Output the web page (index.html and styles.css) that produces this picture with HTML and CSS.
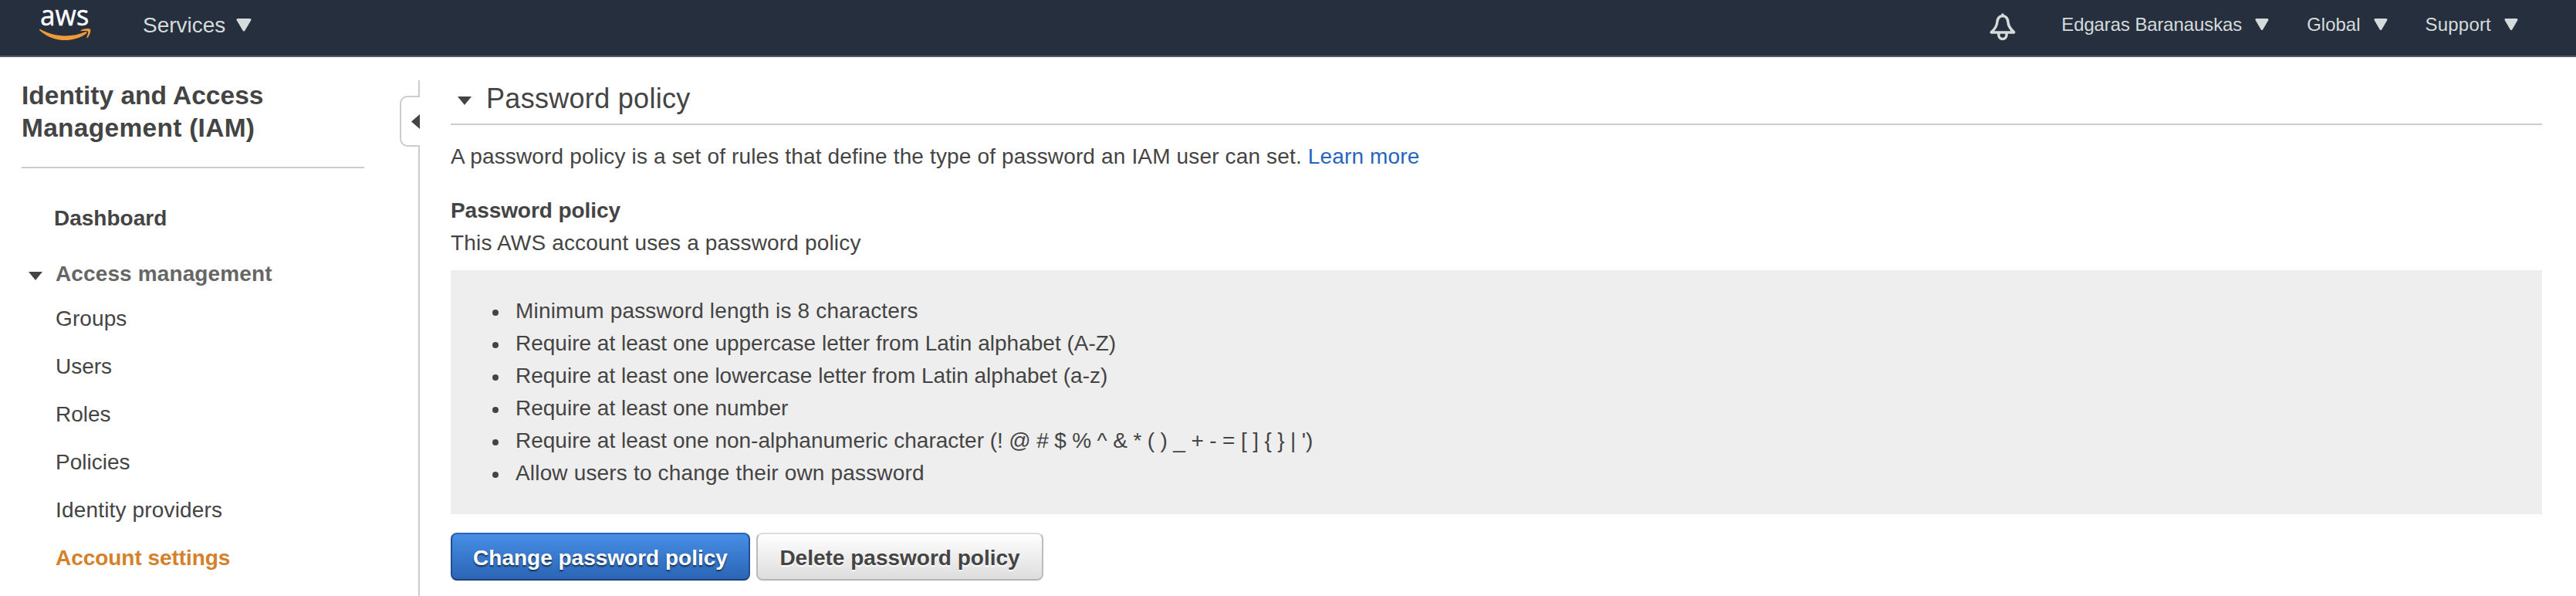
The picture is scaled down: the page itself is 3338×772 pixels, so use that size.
FILE: index.html
```html
<!DOCTYPE html>
<html lang="en">
<head>
<meta charset="utf-8">
<title>IAM Management Console</title>
<link rel="stylesheet" href="styles.css">
</head>
<body>
<header class="topbar">
  <a class="logo" aria-label="aws">
    <svg width="80" height="70" viewBox="46 0 80 70">
      <text class="logo-text" x="52" y="32.500" textLength="63.5" lengthAdjust="spacingAndGlyphs">aws</text>
      <path fill="#f19a38" d="M52 37.800c18 10.200 39.500 11.300 58.500 3.400c1.600-.6 2.700 1.100 1.200 2.200c-7.200 5.500-17.500 8.600-27.200 8.600c-12.800 0-24.400-4.800-33-12.600c-.9-.9-.3-2 .5-1.600z"/>
      <path fill="#f19a38" d="M104.800 39.300c3.300-2.600 11-3 12.200-1.600c1.100 1.400-.3 7.900-3.700 11.300c-.7.600-1.400.2-1-.6c1-2.300 2.500-6.500 1.700-7.600c-.9-1.200-5.700-.8-8.500-.5c-.9.100-1.200-.5-.7-1z"/>
    </svg>
  </a>
  <nav class="nav-left">
    <a class="nav-item services">Services
      <svg class="caret-lg" width="20" height="17" viewBox="0 0 20 17"><path d="M2 1.500H18L10 15z"/></svg>
    </a>
  </nav>
  <nav class="nav-right">
    <svg class="bell" width="36" height="38" viewBox="0 0 36 38">
      <path d="M18 5.500C13 6 11.200 9.500 10.900 14C10.500 19 8 22.500 3.300 26.900H32.700C28 22.500 25.500 19 25.100 14C24.800 9.500 23 6 18 5.500zM18 4V5.500"/>
      <path d="M12.900 27.500V30.300a5.100 5.100 0 0 0 10.200 0V27.500"/>
    </svg>
    <a class="nav-item user">Edgaras Baranauskas<svg class="caret" width="18" height="15" viewBox="0 0 18 15"><path d="M2 1.500H16L9 13.500z"/></svg></a>
    <a class="nav-item region">Global<svg class="caret" width="18" height="15" viewBox="0 0 18 15"><path d="M2 1.500H16L9 13.500z"/></svg></a>
    <a class="nav-item support">Support<svg class="caret" width="18" height="15" viewBox="0 0 18 15"><path d="M2 1.500H16L9 13.500z"/></svg></a>
  </nav>
</header>
<div class="layout">
  <aside class="sidebar">
    <h1 class="side-title">Identity and Access <span class="side-title-end">Management (IAM)</span></h1>
    <a class="side-dashboard">Dashboard</a>
    <div class="side-group"><svg width="18" height="11" viewBox="0 0 18 11"><path d="M0 0H18L9 11z"/></svg>Access management</div>
    <ul class="side-links">
      <li class="groups">Groups</li>
      <li>Users</li>
      <li>Roles</li>
      <li>Policies</li>
      <li class="wide">Identity providers</li>
      <li class="active">Account settings</li>
    </ul>
  </aside>
  <div class="divider">
    <div class="divider-top"></div>
    <div class="handle"><svg width="11" height="19" viewBox="0 0 11 19"><path d="M11 0V19L0 9.500z"/></svg></div>
    <div class="divider-bottom"></div>
  </div>
  <main class="content">
    <h2 class="section-title"><svg width="18" height="11" viewBox="0 0 18 11"><path d="M0 0H18L9 11z"/></svg><span>Password policy</span></h2>
    <p class="intro">A password policy is a set of rules that define the type of password an IAM user can set. <a class="link">Learn more</a></p>
    <h3 class="sub-title">Password policy</h3>
    <p class="status">This AWS account uses a password policy</p>
    <ul class="rules">
      <li class="wide">Minimum password length is 8 characters</li>
      <li>Require at least one uppercase letter from Latin alphabet (A-Z)</li>
      <li>Require at least one lowercase letter from Latin alphabet (a-z)</li>
      <li>Require at least one number</li>
      <li><span>Require at least one non-alphanumeric character <span class="symbols">(! @ # $ % ^ &amp; * ( ) _ + - = [ ] { } | ')</span></span></li>
      <li class="wide">Allow users to change their own password</li>
    </ul>
    <div class="actions">
      <button class="btn primary">Change password policy</button>
      <button class="btn secondary">Delete password policy</button>
    </div>
  </main>
</div>
</body>
</html>
```

FILE: styles.css
```css
* { box-sizing: border-box; margin: 0; padding: 0; }

body {
  height: 772px;
  overflow: hidden;
  background: #fff;
  color: #444;
  font: 28px/42px "Liberation Sans", Arial, sans-serif;
}

ul { list-style: none; }
svg { display: block; flex: none; fill: #444; }

/* Top bar */
.topbar {
  display: flex;
  align-items: flex-start;
  height: 74px;
  padding-left: 46px;
  background: #262f3e;
  border-bottom: 2px solid #545b64;
  color: #d5dbdb;
}
.logo-text { font: 400 37px "Noto Sans", sans-serif; fill: #fff; stroke: #fff; stroke-width: .3; }
.nav-item { display: flex; align-items: flex-start; white-space: nowrap; }
.nav-left { margin: 12px 0 0 59px; }
.services { gap: 14px; }
.caret, .caret-lg { fill: #d5dbdb; stroke: #d5dbdb; stroke-width: 3; stroke-linejoin: round; }
.caret-lg { margin-top: 12px; }
.nav-right {
  display: flex;
  align-items: flex-start;
  margin-left: auto;
  padding: 11px 75px 0 0;
  font-size: 24px;
}
.caret { margin: 13px 0 0 17px; }
.bell {
  margin: 4px 58px 0 0;
  fill: none;
  stroke: #d5dbdb;
  stroke-width: 3.5;
  stroke-linejoin: round;
  stroke-linecap: round;
}
.user { margin-right: 49px; letter-spacing: -.12px; }
.region { margin-right: 49px; }
.support { letter-spacing: .2px; }

/* Page frame */
.layout { display: flex; height: 698px; }

.sidebar { width: 518px; padding: 29px 46px 0 28px; }
.side-title {
  height: 115px;
  border-bottom: 2px solid #ccc;
  font-size: 33.5px;
  line-height: 42px;
}
.side-title-end { letter-spacing: .28px; }
.side-dashboard { display: block; margin: 44px 0 0 42px; font-weight: bold; }
.side-group {
  display: flex;
  align-items: center;
  gap: 17px;
  margin: 30px 0 0 9px;
  color: #666;
  font-weight: bold;
  letter-spacing: .12px;
}
.side-group svg { margin-top: 4px; }
.side-links { padding: 6px 0 0 44px; }
.side-links li { height: 62px; line-height: 62px; }
.side-links .active { color: #d5802b; font-weight: bold; letter-spacing: -.05px; }
.wide { letter-spacing: .17px; }

/* Collapsible edge */
.divider { display: flex; flex-direction: column; width: 26px; padding-top: 30px; }
.divider-top { height: 21px; margin-left: 24px; border-right: 2px solid #ccc; }
.handle {
  display: flex;
  align-items: center;
  justify-content: flex-end;
  height: 66px;
  margin-top: -1px;
  border: 2px solid #ccc;
  border-right: 0;
  border-radius: 10px 0 0 10px;
}
.divider-bottom { flex: 1; margin: -1px 0 0 24px; border-right: 2px solid #ccc; }

/* Main column */
.content { flex: 1; padding: 33px 44px 0 40px; }
.section-title {
  display: flex;
  align-items: center;
  gap: 19px;
  height: 55px;
  padding: 0 0 11px 9px;
  border-bottom: 2px solid #ccc;
  font-size: 36px;
  font-weight: normal;
}
.section-title span { letter-spacing: .3px; }
.section-title svg { margin-top: 4px; }
.intro { margin-top: 20px; letter-spacing: .15px; }
.link { color: #2765bd; }
.sub-title { margin-top: 28px; font-size: 28px; letter-spacing: -.06px; }
.status { letter-spacing: .17px; }
.rules {
  height: 316px;
  margin-top: 14px;
  padding: 32px 0 0 54px;
  background: #eee;
}
.rules li { display: flex; align-items: center; gap: 22px; }
.rules li::before {
  content: "";
  width: 8px;
  height: 8px;
  margin-top: 3px;
  border-radius: 50%;
  background: #444;
}
.symbols { letter-spacing: -.15px; }
.actions { display: flex; gap: 8px; margin-top: 24px; }
.btn {
  height: 62px;
  padding: 3px 0 0;
  border: 2px solid;
  border-color: #dcdcdc #bbb #b5b5b5;
  border-radius: 8px;
  background: linear-gradient(#fff, #ddd);
  color: #444;
  font: bold 28px/55px "Liberation Sans", Arial, sans-serif;
  text-shadow: 0 2px 1px #fff;
}
.primary {
  width: 388px;
  border-color: #2a65b6 #234f8e #1d4278;
  background: linear-gradient(#468ee5, #2b65b5);
  color: #fff;
  text-shadow: 0 2px 2px rgba(0, 0, 0, .6);
}
.secondary { width: 372px; }
.groups { letter-spacing: .1px; }
```
